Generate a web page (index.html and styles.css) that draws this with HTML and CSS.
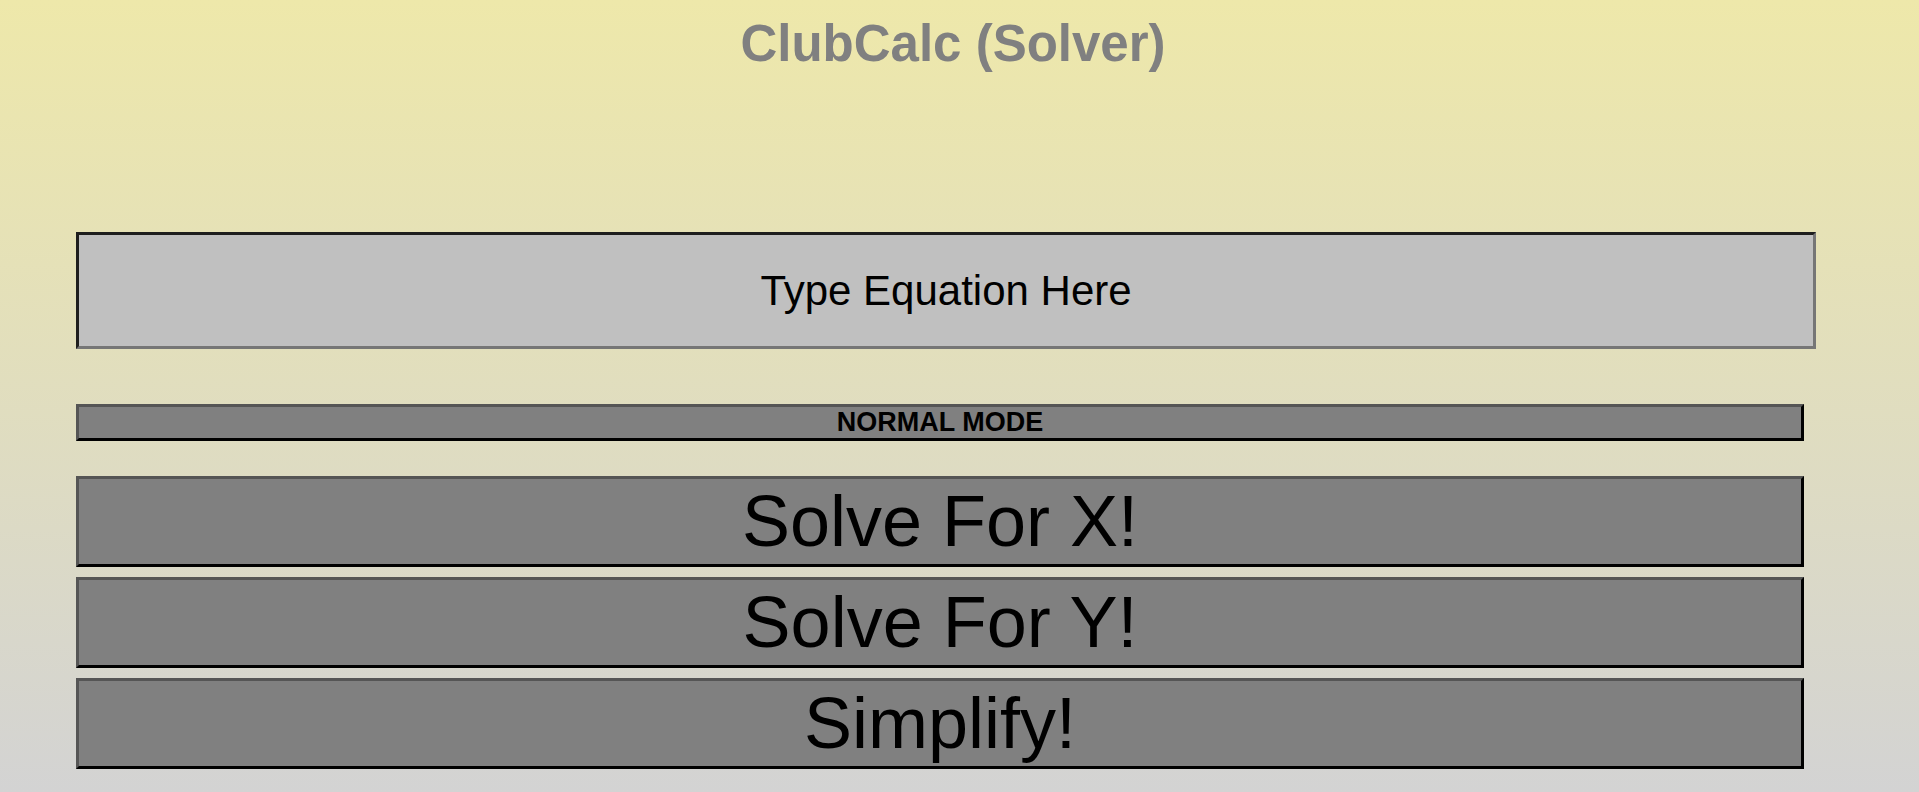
FILE: index.html
```html
<!DOCTYPE html>
<html lang="en">
<head>
<meta charset="utf-8">
<title>ClubCalc (Solver)</title>
<link rel="stylesheet" href="styles.css">
</head>
<body>
<h1 class="title">ClubCalc (Solver)</h1>
<main class="solver">
  <input class="equation" type="text" placeholder="Type Equation Here">
  <button class="mode" type="button">NORMAL MODE</button>
  <div class="actions">
    <button class="action" type="button">Solve For X!</button>
    <button class="action" type="button">Solve For Y!</button>
    <button class="action" type="button">Simplify!</button>
  </div>
</main>
</body>
</html>
```
FILE: styles.css
```css
html {
  height: 100%;
  background: linear-gradient(#eee8aa, #d3d3d3);
}

body {
  margin: 0;
  font-family: "Liberation Sans", Arial, sans-serif;
}

.title {
  margin: 14px 13px 0 0;
  text-align: center;
  font-size: 51px;
  line-height: 59px;
  font-weight: bold;
  color: #808080;
}

.solver {
  display: flex;
  flex-direction: column;
  align-items: flex-start;
  padding: 159px 0 0 76px;
}

.equation {
  box-sizing: border-box;
  width: 1740px;
  height: 117px;
  margin: 0;
  padding: 0;
  border: 3px solid;
  border-color: #1e1e1e #767676 #767676 #1e1e1e;
  background: #c0c0c0;
  font-family: "Liberation Sans", Arial, sans-serif;
  font-size: 42px;
  color: #000;
  text-align: center;
  outline: none;
}

.equation::placeholder {
  color: #000;
  opacity: 1;
}

.mode,
.action {
  box-sizing: border-box;
  width: 1728px;
  margin: 0;
  padding: 0;
  border: 3px solid;
  border-color: #555555 #000 #000 #555555;
  background: #808080;
  color: #000;
  font-family: "Liberation Sans", Arial, sans-serif;
  text-align: center;
}

.mode {
  margin-top: 55px;
  height: 37px;
  font-size: 27px;
  font-weight: bold;
  line-height: 31px;
}

.actions {
  display: flex;
  flex-direction: column;
  gap: 10px;
  margin-top: 35px;
}

.action {
  height: 91px;
  font-size: 72px;
  line-height: 85px;
}
```
